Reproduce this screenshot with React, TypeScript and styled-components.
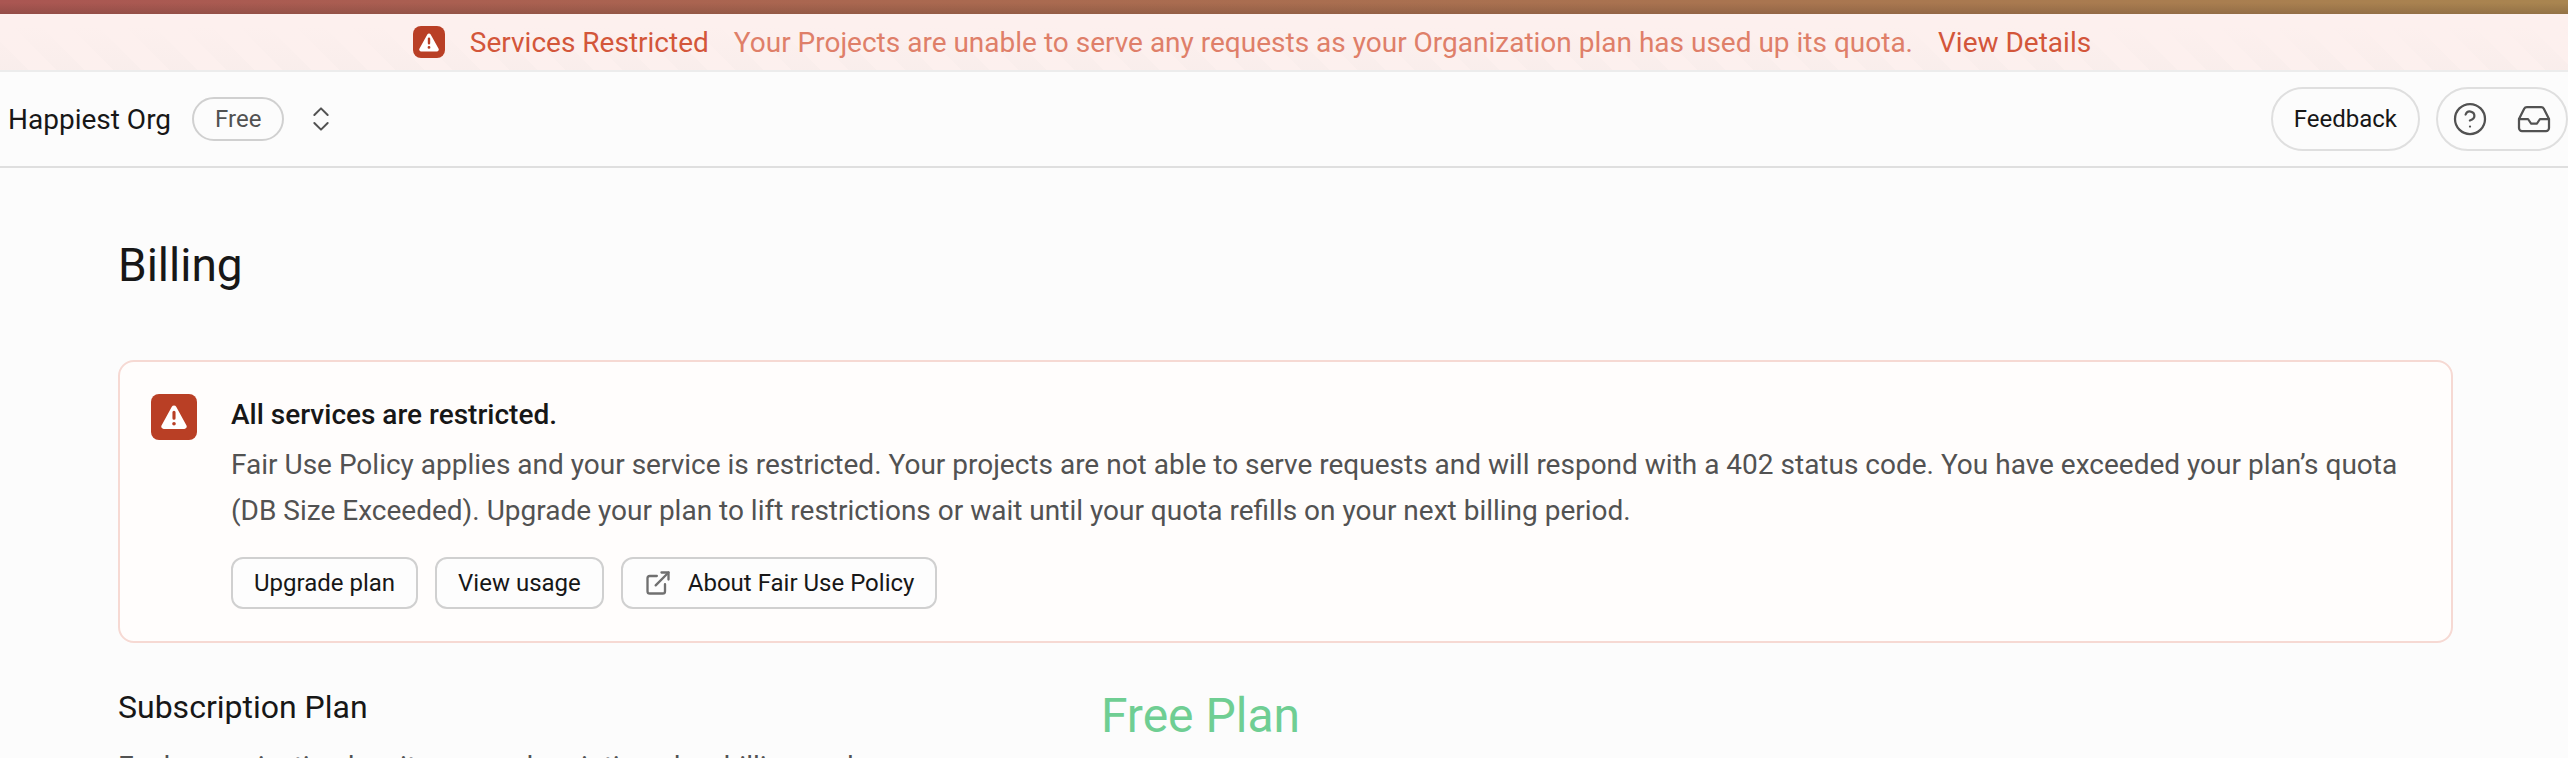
import React from "react";
import styled, { createGlobalStyle } from "styled-components";
import { ChevronsUpDown, CircleHelp, ExternalLink, Inbox } from "lucide-react";

const color = {
  page: "#fcfcfc",
  text: "#171717",
  textLight: "#525252",
  line: "#dfdfdf",
  control: "#d0d0d0",
  danger: "#b93f25",
  dangerText: "#d3563a",
  brand: "#6fce93",
};

const GlobalStyle = createGlobalStyle`
  * { box-sizing: border-box; }
  body {
    margin: 0;
    background: ${color.page};
    color: ${color.text};
    font-family: Roboto, "Liberation Sans", sans-serif;
    font-size: 28px;
  }
  h1, h2, p { margin: 0; font-weight: 400; }
  button, a { font: inherit; color: inherit; text-decoration: none; }
`;

const Shell = styled.div`
  display: flex;
  flex-direction: column;
  height: 100vh;
  overflow: hidden;
`;

const AccentStrip = styled.div`
  flex: none;
  height: 14px;
  background:
    linear-gradient(to bottom, transparent 20%, rgba(60, 40, 30, 0.2)),
    linear-gradient(to right, #aa5652, #aa6850 35%, #a97350 65%, #a98550);
`;

const Banner = styled.div`
  flex: none;
  display: flex;
  align-items: center;
  justify-content: center;
  gap: 25px;
  height: 58px;
  padding-right: 64px;
  border-bottom: 2px solid #ececec;
  color: ${color.dangerText};
  background:
    linear-gradient(to bottom, #fdf0ee 20%, rgba(253, 240, 238, 0.2)),
    repeating-linear-gradient(45deg, #f8edeb 0 20px, #fcf0ee 20px 40px);
`;

const BannerText = styled.p`
  color: #df7f69;
`;

const AlertBadge = styled.span<{ $large?: boolean }>`
  flex: none;
  display: flex;
  align-items: center;
  justify-content: center;
  width: ${(p) => (p.$large ? 46 : 32)}px;
  height: ${(p) => (p.$large ? 46 : 32)}px;
  border-radius: 8px;
  background: ${color.danger};
  color: #fff;

  svg { width: ${(p) => (p.$large ? 26 : 20)}px; }
`;

const Header = styled.header`
  flex: none;
  display: flex;
  align-items: center;
  justify-content: space-between;
  height: 96px;
  padding-left: 8px;
  border-bottom: 2px solid ${color.line};
`;

const OrgSwitcher = styled.div`
  display: flex;
  align-items: center;
  gap: 21px;
`;

const PlanBadge = styled.span`
  display: flex;
  align-items: center;
  height: 44px;
  padding: 0 21px;
  border: 2px solid ${color.control};
  border-radius: 22px;
  color: ${color.textLight};
  font-size: 24px;
`;

const IconButton = styled.button`
  display: flex;
  padding: 0;
  border: 0;
  background: none;
  color: ${color.textLight};
  cursor: pointer;
`;

const HeaderActions = styled.div`
  display: flex;
  gap: 16px;
`;

const FeedbackButton = styled.button`
  height: 64px;
  padding: 0 21px;
  border: 2px solid ${color.line};
  border-radius: 32px;
  background: none;
  color: ${color.text};
  font-size: 24px;
  cursor: pointer;
`;

const ActionGroup = styled.div`
  display: flex;
  align-items: center;
  gap: 28px;
  height: 64px;
  padding: 0 14px;
  border: 2px solid ${color.line};
  border-radius: 32px;
`;

const Main = styled.main`
  padding: 68px 115px 0 118px;
`;

const PageTitle = styled.h1`
  margin-bottom: 66px;
  font-size: 46px;
  line-height: 58px;
`;

const Alert = styled.section`
  display: flex;
  gap: 34px;
  padding: 32px 31px;
  border: 2px solid #f6d9d3;
  border-radius: 16px;
  background: #fffdfc;
`;

const AlertTitle = styled.h2`
  margin-bottom: 6px;
  font-size: 28px;
  font-weight: 500;
  line-height: 42px;
`;

const BodyText = styled.p`
  color: ${color.textLight};
  line-height: 46px;
`;

const AlertActions = styled.div`
  display: flex;
  gap: 17px;
  margin-top: 23px;
`;

const LinkButton = styled.a`
  display: flex;
  align-items: center;
  gap: 16px;
  height: 52px;
  padding: 0 21px;
  border: 2px solid ${color.control};
  border-radius: 12px;
  background: #fdfdfd;
  font-size: 24px;

  svg { color: #707070; }
`;

const PlanSection = styled.section`
  display: grid;
  grid-template-columns: repeat(12, 1fr);
  column-gap: 24px;
  margin-top: 40px;
`;

const PlanIntro = styled.div`
  grid-column: span 5;
`;

const SectionTitle = styled.h2`
  margin-bottom: 13px;
  font-size: 32px;
  line-height: 48px;
`;

const PlanName = styled.p`
  grid-column: span 7;
  color: ${color.brand};
  font-size: 48px;
  line-height: 66px;
`;

const WarningIcon = () => (
  <svg viewBox="0 0 20 19" fill="currentColor" aria-hidden="true">
    <path
      fillRule="evenodd"
      d="M8.3 1.4a1.95 1.95 0 0 1 3.4 0l7.9 14.3A1.9 1.9 0 0 1 17.9 18.4H2.1A1.9 1.9 0 0 1 .4 15.7ZM8.8 5.6v4.6a1.2 1.2 0 0 0 2.4 0V5.6a1.2 1.2 0 0 0-2.4 0ZM10 13a1.4 1.4 0 1 0 0 2.8 1.4 1.4 0 0 0 0-2.8Z"
    />
  </svg>
);

export default function App() {
  return (
    <>
      <GlobalStyle />
      <Shell>
        <AccentStrip />
        <Banner role="alert">
          <AlertBadge>
            <WarningIcon />
          </AlertBadge>
          <span>Services Restricted</span>
          <BannerText>
            Your Projects are unable to serve any requests as your Organization plan has used up its quota.
          </BannerText>
          <a href="#details">View Details</a>
        </Banner>
        <Header>
          <OrgSwitcher>
            <div>Happiest Org</div>
            <PlanBadge>Free</PlanBadge>
            <IconButton aria-label="Switch organization">
              <ChevronsUpDown size={32} strokeWidth={1.5} />
            </IconButton>
          </OrgSwitcher>
          <HeaderActions>
            <FeedbackButton>Feedback</FeedbackButton>
            <ActionGroup>
              <IconButton aria-label="Help">
                <CircleHelp size={36} strokeWidth={1.5} />
              </IconButton>
              <IconButton aria-label="Inbox">
                <Inbox size={36} strokeWidth={1.5} />
              </IconButton>
            </ActionGroup>
          </HeaderActions>
        </Header>
        <Main>
          <PageTitle>Billing</PageTitle>
          <Alert>
            <AlertBadge $large>
              <WarningIcon />
            </AlertBadge>
            <div>
              <AlertTitle>All services are restricted.</AlertTitle>
              <BodyText>
                Fair Use Policy applies and your service is restricted. Your projects are not able to serve requests
                and will respond with a 402 status code. You have exceeded your plan’s quota (DB Size Exceeded).
                Upgrade your plan to lift restrictions or wait until your quota refills on your next billing period.
              </BodyText>
              <AlertActions>
                <LinkButton href="#upgrade">Upgrade plan</LinkButton>
                <LinkButton href="#usage">View usage</LinkButton>
                <LinkButton href="#fair-use">
                  <ExternalLink size={28} strokeWidth={2} />
                  About Fair Use Policy
                </LinkButton>
              </AlertActions>
            </div>
          </Alert>
          <PlanSection>
            <PlanIntro>
              <SectionTitle>Subscription Plan</SectionTitle>
              <BodyText>Each organization has its own subscription plan, billing cycle,</BodyText>
            </PlanIntro>
            <PlanName>Free Plan</PlanName>
          </PlanSection>
        </Main>
      </Shell>
    </>
  );
}
